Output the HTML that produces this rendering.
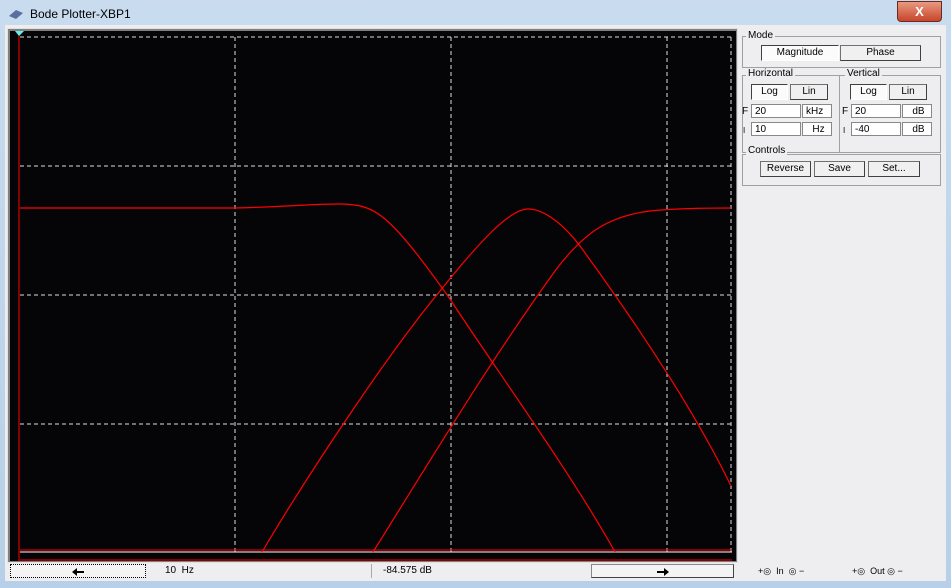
<!DOCTYPE html><html><head><style>
body{margin:0;width:951px;height:588px;overflow:hidden;font-family:"Liberation Sans",sans-serif;font-size:11px;background:#bcd3ea}
.win{position:absolute;left:0;top:0;width:951px;height:588px;background:linear-gradient(#c9dcef,#b7cfe8)}
.title{position:absolute;left:30px;top:7px;font-size:12px;color:#000}
.close{position:absolute;left:897px;top:1px;width:43px;height:19px;background:linear-gradient(#e89a80,#c7452b);border:1px solid #6b2a1c;border-radius:0 0 4px 4px;color:#fff;font-weight:bold;text-align:center;line-height:19px;font-size:13px}
.client{position:absolute;left:5px;top:25px;width:941px;height:556px;background:#eeeef0}
.plot{position:absolute;left:7px;top:28px;width:729px;height:533px;background:#808080;border:1px solid #e0e0e0}
.panel{position:absolute;left:738px;top:28px;width:206px;height:552px;background:#eeeef0}
.grp{position:absolute;border:1px solid #a0a0a0}
.lbl{position:absolute;background:#eeeef0;padding:0 2px;font-size:10px}
.btn{position:absolute;height:14px;border:1px solid #707070;border-right-color:#404040;border-bottom-color:#404040;background:#f0f0f0;text-align:center;line-height:14px;font-size:10px}
.btn.on{background:#fbfbfb;border-color:#404040 #fff #fff #404040}
.in{position:absolute;height:14px;background:#fff;border:1px solid #888;font-size:10px;line-height:14px;padding-left:3px;box-sizing:border-box}
.bot{position:absolute;top:564px;height:14px;font-size:10px;line-height:14px}
</style></head><body><div class="win">
<svg style="position:absolute;left:8px;top:8px" width="16" height="12"><path d="M1 8 L8 2 L15 5 L8 11Z" fill="#5a6fa0"/></svg>
<div class="title">Bode Plotter-XBP1</div>
<div class="close">X</div>
<div class="client"></div>
<div class="plot"></div>
<svg style="position:absolute;left:10px;top:31px" width="726" height="530">
<rect width="726" height="530" fill="#050508"/>
<g stroke="#ddd" stroke-dasharray="4,3" fill="none">
<path d="M10 6H722M10 135H722M10 264H722M10 393H722M225 6V521M441 6V521M657 6V521M721 6V521"/></g>
<path d="M10 521H722" stroke="#fff"/>
<path d="M10 519H722M10 529H722" stroke="#f00"/>
<path d="M9 0V530" stroke="#f00"/>
<path d="M5 0H14L9 5Z" fill="#6ee"/>
<g stroke="#f00" fill="none" stroke-width="1.2">
<path d="M10 177H225C270 176 300 173 330 173C350 173 362 177 375 188C395 205 420 240 440 268C480 330 560 440 605 521"/>
<path d="M252 521C300 440 380 320 430 260C470 210 500 178 518 178C535 178 555 195 570 215C610 270 680 370 721 455"/>
<path d="M363 521C420 430 480 330 545 240C575 200 600 185 640 180C670 177 700 177 721 177"/>
</g></svg>
<div class="panel">
<div class="grp" style="left:4px;top:8px;width:197px;height:30px"></div><div class="lbl" style="left:8px;top:2px">Mode</div>
<div class="btn on" style="left:23px;top:17px;width:76px">Magnitude</div>
<div class="btn" style="left:102px;top:17px;width:79px">Phase</div>
<div class="grp" style="left:4px;top:47px;width:96px;height:76px"></div><div class="lbl" style="left:8px;top:40px">Horizontal</div>
<div class="grp" style="left:101px;top:47px;width:100px;height:76px"></div><div class="lbl" style="left:107px;top:40px">Vertical</div>
<div class="btn on" style="left:13px;top:56px;width:35px">Log</div><div class="btn" style="left:52px;top:56px;width:36px">Lin</div>
<div class="btn on" style="left:112px;top:56px;width:35px">Log</div><div class="btn" style="left:151px;top:56px;width:36px">Lin</div>
<div style="position:absolute;left:4px;top:78px;font-size:10px">F</div><div style="position:absolute;left:5px;top:98px;font-size:8px">I</div>
<div style="position:absolute;left:104px;top:78px;font-size:10px">F</div><div style="position:absolute;left:105px;top:98px;font-size:8px">I</div>
<div class="in" style="left:13px;top:76px;width:50px">20</div><div class="in" style="left:64px;top:76px;width:30px">kHz</div>
<div class="in" style="left:13px;top:94px;width:50px">10</div><div class="in" style="left:64px;top:94px;width:30px;text-align:center">Hz</div>
<div class="in" style="left:113px;top:76px;width:50px">20</div><div class="in" style="left:164px;top:76px;width:30px;text-align:center">dB</div>
<div class="in" style="left:113px;top:94px;width:50px">-40</div><div class="in" style="left:164px;top:94px;width:30px;text-align:center">dB</div>
<div class="grp" style="left:4px;top:126px;width:197px;height:30px"></div><div class="lbl" style="left:8px;top:117px">Controls</div>
<div class="btn" style="left:22px;top:133px;width:49px">Reverse</div>
<div class="btn" style="left:76px;top:133px;width:49px">Save</div>
<div class="btn" style="left:130px;top:133px;width:50px">Set...</div>
</div>
<div class="bot" style="left:10px;width:136px;background:#f4f4f4;border:1px dotted #000;box-sizing:border-box"><svg style="position:absolute;left:61px;top:3px" width="12" height="8"><path d="M0 4L5 0V3H12V5H5V8Z" fill="#000"/></svg></div>
<div class="bot" style="left:165px">10&nbsp; Hz</div>
<div class="bot" style="left:371px;border-left:1px solid #aaa;padding-left:11px">-84.575 dB</div>
<div class="bot" style="left:591px;width:143px;background:#f4f4f4;border:1px solid #888;border-bottom-color:#444;border-right-color:#444;box-sizing:border-box"><svg style="position:absolute;left:65px;top:3px" width="12" height="8"><path d="M12 4L7 0V3H0V5H7V8Z" fill="#000"/></svg></div>
<div class="bot" style="left:758px;font-size:9px">+◎&nbsp; In&nbsp; ◎ −</div>
<div class="bot" style="left:852px;font-size:9px">+◎&nbsp; Out ◎ −</div>
</div></body></html>
